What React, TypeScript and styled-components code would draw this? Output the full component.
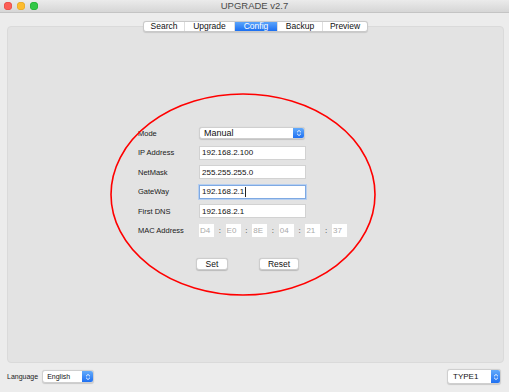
import React from 'react';
import styled, { createGlobalStyle } from 'styled-components';

const GlobalStyle = createGlobalStyle`
  html, body {
    margin: 0;
    padding: 0;
    background: #ececec;
  }
  body {
    font-family: 'Liberation Sans', Arial, sans-serif;
    color: #1d1d1d;
  }
`;

const WindowStyle = styled.div`
  width: 509px;
  height: 392px;
  display: flex;
  flex-direction: column;
  background: #ececec;
  overflow: hidden;
`;

const TitleBarStyle = styled.div`
  box-sizing: border-box;
  height: 13px;
  display: grid;
  grid-template-columns: 1fr auto 1fr;
  align-items: center;
  background: linear-gradient(#ebebeb, #d6d6d6);
  border-bottom: 1px solid #c4c4c4;
  .title {
    font-size: 9.5px;
    color: #4a4a4a;
    line-height: 12px;
  }
`;

const LightsStyle = styled.div`
  display: flex;
  gap: 5px;
  padding-left: 4px;
`;

const LightStyle = styled.span<{ color: string; edge: string }>`
  width: 8px;
  height: 8px;
  border-radius: 50%;
  background: ${(p) => p.color};
  box-shadow: inset 0 0 0 0.5px ${(p) => p.edge};
`;

const ContentStyle = styled.div`
  display: flex;
  flex-direction: column;
  padding: 8px 5px 0 7px;
`;

const TabBarStyle = styled.div`
  position: relative;
  z-index: 1;
  display: flex;
  justify-content: center;
  margin-bottom: -6px;
`;

const TabGroupStyle = styled.div`
  display: flex;
  box-sizing: border-box;
  height: 11px;
  background: #fff;
  border: 1px solid #c9c9c9;
  border-radius: 3px;
  overflow: hidden;
  box-shadow: 0 0.5px 1px rgba(0, 0, 0, 0.12);
`;

const TabStyle = styled.div<{ $w: number; $active?: boolean }>`
  box-sizing: border-box;
  width: ${(p) => p.$w}px;
  display: flex;
  align-items: center;
  justify-content: center;
  font-size: 8.5px;
  line-height: 9px;
  color: ${(p) => (p.$active ? '#fff' : '#111')};
  background: ${(p) =>
    p.$active ? 'linear-gradient(#5ba4fb, #1b6ff1)' : 'transparent'};
  & + & {
    border-left: 1px solid #dedede;
  }
`;

const PanelStyle = styled.div`
  position: relative;
  box-sizing: border-box;
  height: 337px;
  background: #e3e3e3;
  border: 1px solid #dadada;
  border-radius: 4px;
  padding: 99px 0 0 130px;
`;

const FormGridStyle = styled.div`
  display: grid;
  grid-template-columns: 61px auto;
  grid-auto-rows: 14px;
  row-gap: 5.5px;
  align-items: center;
`;

const LabelStyle = styled.span`
  font-size: 7.5px;
  color: #1a1a1a;
`;

const InputStyle = styled.div<{ $focused?: boolean }>`
  box-sizing: border-box;
  width: 107px;
  height: 14px;
  display: flex;
  align-items: center;
  padding-left: 2px;
  background: #fff;
  border: 1px solid ${(p) => (p.$focused ? '#7ea9e3' : '#d2d2d2')};
  box-shadow: ${(p) => (p.$focused ? '0 0 0 1px #b6cff0' : 'none')};
  font-size: 8px;
  color: #111;
`;

const CaretStyle = styled.span`
  display: inline-block;
  width: 0.6px;
  height: 10px;
  margin-left: 1px;
  background: #222;
`;

const SelectStyle = styled.div<{ $w: number; $h: number; $fs: number; $pl: number }>`
  box-sizing: border-box;
  width: ${(p) => p.$w}px;
  height: ${(p) => p.$h}px;
  display: flex;
  align-items: stretch;
  background: #fff;
  border: 1px solid #cfcfcf;
  border-radius: 3px;
  overflow: hidden;
  box-shadow: 0 0.5px 1px rgba(0, 0, 0, 0.15);
  .value {
    flex: 1;
    display: flex;
    align-items: center;
    padding-left: ${(p) => p.$pl}px;
    font-size: ${(p) => p.$fs}px;
    color: #111;
  }
`;

const StepperStyle = styled.div<{ $w: number }>`
  width: ${(p) => p.$w}px;
  display: flex;
  align-items: center;
  justify-content: center;
  background: linear-gradient(#63abfb, #1f70f2);
`;

const MacRowStyle = styled.div`
  display: flex;
  align-items: center;
`;

const MacBoxStyle = styled.div`
  box-sizing: border-box;
  width: 15px;
  height: 13px;
  display: flex;
  align-items: center;
  padding-left: 1px;
  background: #fff;
  font-size: 8px;
  color: #a9a9a9;
`;

const MacSepStyle = styled.span`
  width: 11.6px;
  text-align: center;
  font-size: 8px;
  color: #333;
`;

const ButtonRowStyle = styled.div`
  display: flex;
  gap: 31px;
  margin-top: 20.5px;
  padding-left: 58px;
`;

const ButtonStyle = styled.div<{ $w: number }>`
  box-sizing: border-box;
  width: ${(p) => p.$w}px;
  height: 12px;
  display: flex;
  align-items: center;
  justify-content: center;
  background: #fff;
  border: 0.5px solid #cdcdcd;
  border-radius: 3px;
  box-shadow: 0 0.5px 1px rgba(0, 0, 0, 0.18);
  font-size: 8.5px;
  color: #111;
`;

const EllipseOverlay = styled.svg`
  position: absolute;
  left: 0;
  top: 0;
  width: 100%;
  height: 100%;
  pointer-events: none;
`;

const BottomBarStyle = styled.div`
  flex: 1;
  display: flex;
  align-items: center;
  justify-content: space-between;
  padding: 0 8px 2px 7px;
`;

const LanguageStyle = styled.div`
  display: flex;
  align-items: center;
  gap: 4px;
  span {
    font-size: 7px;
    color: #222;
  }
`;

function Chevrons() {
  return (
    <svg width="6" height="8" viewBox="0 0 6 8">
      <path
        d="M1.3 3 L3 1.4 L4.7 3 M1.3 5 L3 6.6 L4.7 5"
        stroke="#fff"
        strokeWidth="0.9"
        fill="none"
        strokeLinecap="round"
        strokeLinejoin="round"
      />
    </svg>
  );
}

function Select(props: {
  value: string;
  width: number;
  height: number;
  fontSize: number;
  padLeft: number;
  stepper: number;
}) {
  return (
    <SelectStyle $w={props.width} $h={props.height} $fs={props.fontSize} $pl={props.padLeft}>
      <span className="value">{props.value}</span>
      <StepperStyle $w={props.stepper}>
        <Chevrons />
      </StepperStyle>
    </SelectStyle>
  );
}

const tabs = ['Search', 'Upgrade', 'Config', 'Backup', 'Preview'];
const tabWidths = [40, 50, 43, 45, 45];
const macParts = ['D4', 'E0', '8E', '04', '21', '37'];

function App() {
  return (
    <WindowStyle>
      <GlobalStyle />
      <TitleBarStyle>
        <LightsStyle>
          <LightStyle color="#fc5f57" edge="#e0443e" />
          <LightStyle color="#fdbc2e" edge="#dea123" />
          <LightStyle color="#33c748" edge="#1aab29" />
        </LightsStyle>
        <span className="title">UPGRADE v2.7</span>
        <span />
      </TitleBarStyle>
      <ContentStyle>
        <TabBarStyle>
          <TabGroupStyle>
            {tabs.map((t, i) => (
              <TabStyle key={t} $w={tabWidths[i]} $active={t === 'Config'}>
                {t}
              </TabStyle>
            ))}
          </TabGroupStyle>
        </TabBarStyle>
        <PanelStyle>
          <FormGridStyle>
            <LabelStyle>Mode</LabelStyle>
            <Select value="Manual" width={106} height={12} fontSize={9} padLeft={4} stepper={11} />
            <LabelStyle>IP Address</LabelStyle>
            <InputStyle>192.168.2.100</InputStyle>
            <LabelStyle>NetMask</LabelStyle>
            <InputStyle>255.255.255.0</InputStyle>
            <LabelStyle>GateWay</LabelStyle>
            <InputStyle $focused>
              192.168.2.1
              <CaretStyle />
            </InputStyle>
            <LabelStyle>First DNS</LabelStyle>
            <InputStyle>192.168.2.1</InputStyle>
            <LabelStyle>MAC Address</LabelStyle>
            <MacRowStyle>
              {macParts.map((m, i) => (
                <React.Fragment key={i}>
                  {i > 0 && <MacSepStyle>:</MacSepStyle>}
                  <MacBoxStyle>{m}</MacBoxStyle>
                </React.Fragment>
              ))}
            </MacRowStyle>
          </FormGridStyle>
          <ButtonRowStyle>
            <ButtonStyle $w={32}>Set</ButtonStyle>
            <ButtonStyle $w={40}>Reset</ButtonStyle>
          </ButtonRowStyle>
          <EllipseOverlay>
            <ellipse
              cx="235"
              cy="167.5"
              rx="132"
              ry="100.5"
              fill="none"
              stroke="#ff0000"
              strokeWidth="1.6"
            />
          </EllipseOverlay>
        </PanelStyle>
      </ContentStyle>
      <BottomBarStyle>
        <LanguageStyle>
          <span>Language</span>
          <Select value="English" width={52} height={13} fontSize={7} padLeft={4} stepper={11} />
        </LanguageStyle>
        <Select value="TYPE1" width={54} height={15} fontSize={8} padLeft={5} stepper={9} />
      </BottomBarStyle>
    </WindowStyle>
  );
}

export default App;
